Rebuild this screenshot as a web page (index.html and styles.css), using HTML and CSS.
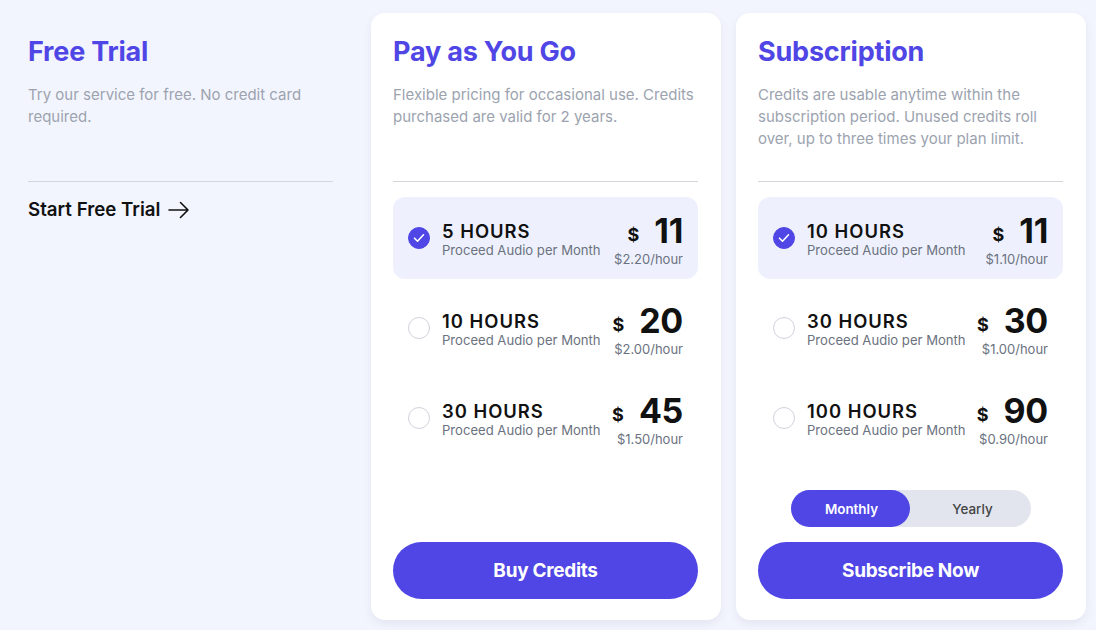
FILE: index.html
```html
<!DOCTYPE html>
<html>
<head>
<meta charset="utf-8">
<link rel="stylesheet" href="styles.css">
</head>
<body>
<div class="page">
  <section class="col free">
    <div class="head">
      <h2 class="title">Free Trial</h2>
      <p class="desc">Try our service for free. No credit card required.</p>
    </div>
    <hr class="divider">
    <a class="trial-link">Start Free Trial
      <svg width="22" height="18" viewBox="0 0 22 18" fill="none" stroke="#111" stroke-width="1.6" stroke-linecap="round" stroke-linejoin="round"><path d="M1 9h19M12.5 1.5L20 9l-7.5 7.5"/></svg>
    </a>
  </section>

  <section class="col card">
    <div class="head">
      <h2 class="title">Pay as You Go</h2>
      <p class="desc">Flexible pricing for occasional use. Credits purchased are valid for 2 years.</p>
    </div>
    <hr class="divider">
    <div class="options">
      <div class="option selected">
        <span class="radio checked"><svg width="12" height="10" viewBox="0 0 12 10" fill="none" stroke="#fff" stroke-width="1.6" stroke-linecap="round" stroke-linejoin="round"><path d="M1.5 5.2l3 3 6-6.4"/></svg></span>
        <div class="info"><div class="hours">5 HOURS</div><div class="sub">Proceed Audio per Month</div></div>
        <div class="price"><div class="amt"><span class="cur">$</span><span class="num">11</span></div><div class="rate">$2.20/hour</div></div>
      </div>
      <div class="option">
        <span class="radio"></span>
        <div class="info"><div class="hours">10 HOURS</div><div class="sub">Proceed Audio per Month</div></div>
        <div class="price"><div class="amt"><span class="cur">$</span><span class="num">20</span></div><div class="rate">$2.00/hour</div></div>
      </div>
      <div class="option">
        <span class="radio"></span>
        <div class="info"><div class="hours">30 HOURS</div><div class="sub">Proceed Audio per Month</div></div>
        <div class="price"><div class="amt"><span class="cur">$</span><span class="num">45</span></div><div class="rate">$1.50/hour</div></div>
      </div>
    </div>
    <button class="cta">Buy Credits</button>
  </section>

  <section class="col card">
    <div class="head">
      <h2 class="title">Subscription</h2>
      <p class="desc">Credits are usable anytime within the subscription period. Unused credits roll over, up to three times your plan limit.</p>
    </div>
    <hr class="divider">
    <div class="options">
      <div class="option selected">
        <span class="radio checked"><svg width="12" height="10" viewBox="0 0 12 10" fill="none" stroke="#fff" stroke-width="1.6" stroke-linecap="round" stroke-linejoin="round"><path d="M1.5 5.2l3 3 6-6.4"/></svg></span>
        <div class="info"><div class="hours">10 HOURS</div><div class="sub">Proceed Audio per Month</div></div>
        <div class="price"><div class="amt"><span class="cur">$</span><span class="num">11</span></div><div class="rate">$1.10/hour</div></div>
      </div>
      <div class="option">
        <span class="radio"></span>
        <div class="info"><div class="hours">30 HOURS</div><div class="sub">Proceed Audio per Month</div></div>
        <div class="price"><div class="amt"><span class="cur">$</span><span class="num">30</span></div><div class="rate">$1.00/hour</div></div>
      </div>
      <div class="option">
        <span class="radio"></span>
        <div class="info"><div class="hours">100 HOURS</div><div class="sub">Proceed Audio per Month</div></div>
        <div class="price"><div class="amt"><span class="cur">$</span><span class="num">90</span></div><div class="rate">$0.90/hour</div></div>
      </div>
    </div>
    <div class="toggle"><span class="tg active">Monthly</span><span class="tg">Yearly</span></div>
    <button class="cta">Subscribe Now</button>
  </section>
</div>
</body>
</html>
```

FILE: styles.css
```css
* { box-sizing: border-box; }
html, body { margin: 0; padding: 0; }
body {
  background: #f3f5fe;
  font-family: Inter, "Noto Sans", sans-serif;
  color: #111;
  width: 1096px;
  height: 630px;
  overflow: hidden;
}
.page {
  display: flex;
  gap: 15px;
  padding: 13px 10px 0 6px;
  align-items: flex-start;
}
.col {
  width: 350px;
  padding: 23px 23px 21px 22px;
  display: flex;
  flex-direction: column;
}
.card {
  background: #fff;
  border-radius: 14px;
  height: 607px;
  box-shadow: 0 4px 10px rgba(40, 50, 90, 0.08);
}
.head { height: 145px; }
.title {
  margin: 0;
  font-size: 27px;
  line-height: 32px;
  font-weight: 700;
  color: #4f46e5;
  letter-spacing: -0.2px;
}
.desc {
  margin: 16px 0 0;
  font-size: 15px;
  line-height: 22px;
  color: #9ca3af;
}
.divider {
  margin: 0;
  border: 0;
  border-top: 1px solid #d4d6dc;
  height: 0;
}
.trial-link {
  margin-top: 16px;
  display: flex;
  align-items: center;
  gap: 8px;
  font-size: 18.7px;
  font-weight: 600;
  color: #111;
  line-height: 24px;
}
.options {
  margin-top: 15px;
  display: flex;
  flex-direction: column;
  gap: 8px;
}
.option {
  height: 82px;
  border-radius: 12px;
  display: flex;
  align-items: center;
  padding: 0 15px;
}
.option.selected { background: #eef1fd; }
.radio {
  width: 22px;
  height: 22px;
  border-radius: 50%;
  border: 1px solid #d1d3dc;
  background: #fff;
  flex: none;
  display: flex;
  align-items: center;
  justify-content: center;
}
.radio.checked { background: #4f46e5; border-color: #4f46e5; }
.info { margin-left: 12px; flex: 1; padding-top: 1px; }
.hours {
  font-size: 18.4px;
  font-weight: 600;
  letter-spacing: 1px;
  line-height: 22px;
  color: #111;
}
.sub {
  font-size: 13.1px;
  line-height: 16px;
  color: #6b7280;
}
.price { text-align: right; padding-top: 4px; }
.amt {
  display: flex;
  align-items: center;
  justify-content: flex-end;
  gap: 15px;
  height: 36px;
}
.cur { font-size: 18px; font-weight: 700; position: relative; top: 3px; }
.num { font-size: 34px; font-weight: 700; line-height: 36px; letter-spacing: -0.3px; }
.rate {
  margin-top: 2px;
  font-size: 13px;
  line-height: 16px;
  color: #6b7280;
}
.toggle {
  margin-top: auto;
  align-self: center;
  display: flex;
  width: 240px;
  height: 37px;
  border-radius: 19px;
  background: #e2e5ed;
}
.tg {
  flex: 1;
  display: flex;
  align-items: center;
  justify-content: center;
  font-size: 13.4px;
  font-weight: 500;
  color: #444;
  border-radius: 19px;
}
.tg:last-child { padding-left: 5px; }
.tg.active { background: #4f46e5; color: #fff; font-weight: 600; padding-left: 3px; }
.cta {
  margin-top: auto;
  height: 57px;
  border: 0;
  border-radius: 29px;
  background: #4f46e5;
  color: #fff;
  font-family: Inter, sans-serif;
  font-size: 19px;
  font-weight: 700;
  letter-spacing: -0.3px;
  line-height: 1;
  padding-bottom: 2px;
}
.toggle + .cta { margin-top: 15px; }
```
